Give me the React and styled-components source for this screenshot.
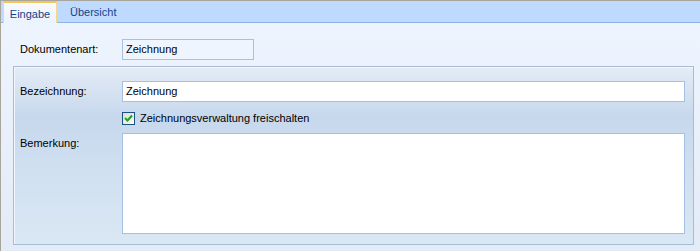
import React from 'react';
import styled, { createGlobalStyle } from 'styled-components';

const GlobalStyle = createGlobalStyle`
    body {
        margin: 0;
        font-family: "Liberation Sans", Arial, sans-serif;
        font-size: 11px;
        color: #000;
    }
`;

const Frame = styled.div`
    width: 700px;
    height: 251px;
    box-sizing: border-box;
    border-top: 1px solid #a9a59c;
    border-left: 1px solid #a9a59c;
    display: flex;
    flex-direction: column;
    background: linear-gradient(#eef5ff, #e3ebf7);
    overflow: hidden;
`;

const TabStrip = styled.div`
    height: 21px;
    flex: none;
    display: flex;
    align-items: stretch;
    padding-left: 2px;
    background: #bedbff;
    border-bottom: 1px solid #8db3e4;
`;

const Tab = styled.div`
    display: flex;
    align-items: center;
    justify-content: center;
    box-sizing: border-box;
    color: #15428b;
    cursor: default;
    ${props => props.active ? `
        width: 54px;
        height: 22px;
        margin-bottom: -1px;
        padding-top: 1px;
        background: linear-gradient(#f8fbff, #eaf2fd);
        border: 1px solid #f3d98f;
        border-top: 2px solid #f1c65c;
        border-bottom: none;
        position: relative;
    ` : `
        padding: 0 8px;
        margin-left: 5px;
    `}
`;

const Body = styled.div`
    flex: 1;
    display: flex;
    flex-direction: column;
    padding: 16px 6px 0 12px;
`;

const Row = styled.div`
    display: flex;
    align-items: flex-start;
    padding-left: ${props => props.indent || 0}px;
`;

const Label = styled.div`
    width: 102px;
    flex: none;
    padding-top: 4px;
    line-height: 13px;
`;

const ReadOnlyBox = styled.div`
    width: 132px;
    height: 21px;
    box-sizing: border-box;
    border: 1px solid #a9c1e0;
    background: #eef5fe;
    padding: 3px 3px 0;
    line-height: 13px;
`;

const Group = styled.div`
    margin-top: 6px;
    height: 179px;
    box-sizing: border-box;
    border: 1px solid #aabbd5;
    box-shadow: inset 1px 1px 0 #f2f7fc;
    background: linear-gradient(#e4ecf6 0%, #c7d8ed 28%, #d0e0f0 60%, #dae7f4 100%);
    padding: 14px 8px 10px 6px;
    display: flex;
    flex-direction: column;
`;

const TextInput = styled.div`
    flex: 1;
    height: 21px;
    box-sizing: border-box;
    border: 1px solid #a6c0e1;
    background: #fff;
    padding: 3px 3px 0;
    line-height: 13px;
`;

const TextArea = styled(TextInput)`
    height: 101px;
`;

const CheckRow = styled.div`
    display: flex;
    align-items: center;
    gap: 5px;
    padding: 10px 0 8px 102px;
    line-height: 13px;
`;

const CheckBox = styled.div`
    width: 13px;
    height: 13px;
    box-sizing: border-box;
    border: 1px solid #1c5180;
    background: linear-gradient(135deg, #dcdcd7, #fbfbf9);
    display: flex;
    align-items: center;
    justify-content: center;
`;

export default function App() {
    return (
        <>
            <GlobalStyle />
            <Frame>
                <TabStrip>
                    <Tab active>Eingabe</Tab>
                    <Tab>Übersicht</Tab>
                </TabStrip>
                <Body>
                    <Row indent={7}>
                        <Label>Dokumentenart:</Label>
                        <ReadOnlyBox>Zeichnung</ReadOnlyBox>
                    </Row>
                    <Group>
                        <Row>
                            <Label>Bezeichnung:</Label>
                            <TextInput>Zeichnung</TextInput>
                        </Row>
                        <CheckRow>
                            <CheckBox>
                                <svg width="9" height="9" viewBox="0 0 9 9">
                                    <path d="M1 4 L3.5 6.5 L8 1.5" fill="none" stroke="#21a121" strokeWidth="2" />
                                </svg>
                            </CheckBox>
                            <span>Zeichnungsverwaltung freischalten</span>
                        </CheckRow>
                        <Row>
                            <Label>Bemerkung:</Label>
                            <TextArea />
                        </Row>
                    </Group>
                </Body>
            </Frame>
        </>
    );
}
